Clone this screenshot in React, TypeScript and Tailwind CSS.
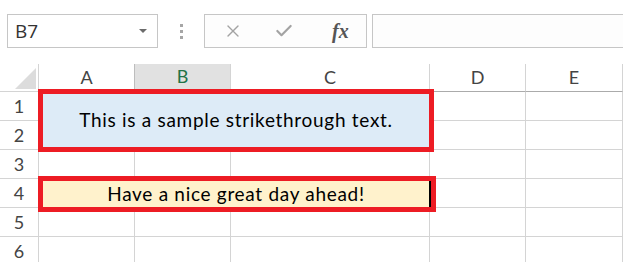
import { X, Check } from 'lucide-react';

const GRID = 'border-r border-b border-[#d4d4d4]';
const COLS = ['A', 'B', 'C', 'D', 'E'];

function RowHead({ n }: { n: number }) {
    return (
        <div className="flex items-center justify-center border-r border-b border-[#d4d4d4] text-[18px] text-[#444]">
            {n}
        </div>
    );
}

export default function App() {
    return (
        <div className="w-[623px] h-[262px] bg-white overflow-hidden font-['Lato',sans-serif]">
            {/* toolbar: name box + formula bar */}
            <div className="h-[64px] flex items-start pt-[14px] pl-[7px]">
                <div className="w-[151px] h-[34px] border border-[#c6c6c6] bg-white flex items-center justify-between pl-[7px] pr-[10px]">
                    <span className="text-[19px] text-[#333] leading-none font-['Open_Sans',sans-serif]">B7</span>
                    <span className="w-0 h-0 border-l-[4px] border-r-[4px] border-t-[4px] border-l-transparent border-r-transparent border-t-[#6b6b6b]" />
                </div>
                <div className="w-[46px] h-[34px] flex flex-col items-center justify-center gap-[3px]">
                    <span className="w-[3px] h-[3px] bg-[#a6a6a6]" />
                    <span className="w-[3px] h-[3px] bg-[#a6a6a6]" />
                    <span className="w-[3px] h-[3px] bg-[#a6a6a6]" />
                </div>
                <div className="w-[163px] h-[34px] border border-[#c6c6c6] bg-[#fdfdfd] flex items-center">
                    <X className="ml-[18px] w-[20px] h-[20px] text-[#a3a3a3]" strokeWidth={1.6} />
                    <Check className="ml-[31px] w-[20px] h-[20px] text-[#a3a3a3]" strokeWidth={2.6} />
                    <span className="ml-[38px] text-[20px] italic font-bold text-[#555] font-['Liberation_Serif',serif] leading-none">fx</span>
                </div>
                <div className="ml-[5px] flex-1 -mr-[4px] h-[34px] border border-[#c6c6c6] bg-[#fdfdfd]" />
            </div>

            {/* sheet */}
            <div className="grid grid-cols-[39px_96px_96px_199px_96px_97px] grid-rows-[28px_repeat(6,29px)]">
                {/* header row */}
                <div className="relative border-r border-b border-[#d4d4d4]">
                    <svg className="absolute left-[15px] top-[4px]" width="21" height="21" viewBox="0 0 21 21">
                        <polygon points="21,0 21,21 0,21" fill="#dcdcdc" />
                    </svg>
                </div>
                {COLS.map((c) =>
                    c === 'B' ? (
                        <div key={c} className="flex items-center justify-center bg-[#e1e1e1] border-l border-l-[#bdbdbd] border-r border-r-[#d4d4d4] border-b-[3px] border-b-[#217346] -ml-px text-[18px] text-[#217346]">
                            {c}
                        </div>
                    ) : (
                        <div key={c} className="flex items-center justify-center border-r border-b border-[#d4d4d4] border-b-[#ababab] text-[18px] text-[#444]">
                            {c}
                        </div>
                    )
                )}

                {/* row 1 */}
                <RowHead n={1} />
                <div className="relative z-10 col-span-3 row-span-2 -mt-[3px] -ml-px -mr-[4px] -mb-[2px] border-[5px] border-[#ed1c24] bg-[#ddebf7] flex items-center justify-center text-[19px] tracking-[0.7px] text-black">
                    This is a sample strikethrough text.
                </div>
                <div className={GRID} />
                <div className={GRID} />

                {/* row 2 */}
                <RowHead n={2} />
                <div className={GRID} />
                <div className={GRID} />

                {/* row 3 */}
                <RowHead n={3} />
                <div className={GRID} />
                <div className={GRID} />
                <div className={GRID} />
                <div className={GRID} />
                <div className={GRID} />

                {/* row 4 */}
                <RowHead n={4} />
                <div className="relative z-10 col-span-3 -mt-[3px] -ml-px -mr-[6px] -mb-[4px] border-[5px] border-[#ed1c24] bg-[#fff2cc]">
                    <div className="h-full border-r-2 border-black flex items-center justify-center text-[19px] tracking-[0.7px] text-black">
                        Have a nice great day ahead!
                    </div>
                </div>
                <div className={GRID} />
                <div className={GRID} />

                {/* rows 5-6 */}
                {[5, 6].map((n) => (
                    <>
                        <RowHead key={`h${n}`} n={n} />
                        {COLS.map((c) => (
                            <div key={`${c}${n}`} className={GRID} />
                        ))}
                    </>
                ))}
            </div>
        </div>
    );
}
